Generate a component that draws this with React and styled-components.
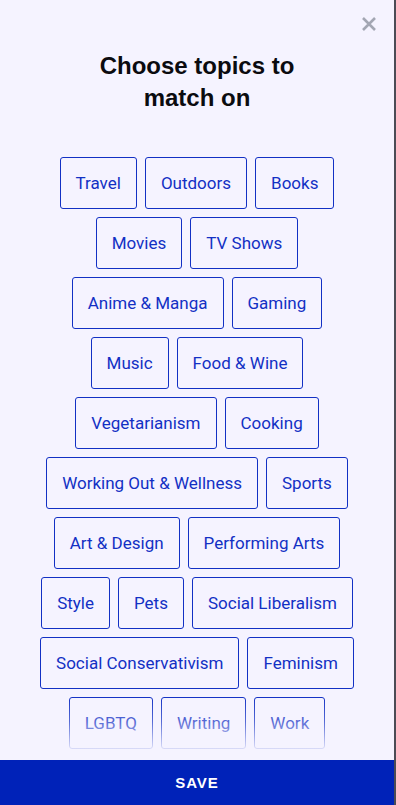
import React from 'react';
import styled, { createGlobalStyle } from 'styled-components';

const Global = createGlobalStyle`
	html, body {
		margin: 0;
		padding: 0;
		height: 100%;
		background: #4b4b55;
	}
	#root {
		height: 100%;
	}
`;

const Modal = styled.div`
	width: 394px;
	height: 805px;
	background: #f5f3ff;
	display: flex;
	flex-direction: column;
	position: relative;
	font-family: Roboto, 'Liberation Sans', sans-serif;
`;

const Close = styled.button`
	position: absolute;
	top: 14px;
	right: 15px;
	width: 20px;
	height: 20px;
	padding: 0;
	border: none;
	background: transparent;
	display: flex;
	align-items: center;
	justify-content: center;
`;

const Title = styled.h1`
	margin: 50px 0 0;
	font-family: 'Liberation Sans', Arial, sans-serif;
	font-weight: 700;
	font-size: 24px;
	line-height: 32px;
	text-align: center;
	color: #0b0b0f;
`;

const Scroll = styled.div`
	flex: 1;
	position: relative;
	overflow: hidden;
	margin-top: 43px;
`;

const Topics = styled.div`
	display: flex;
	flex-wrap: wrap;
	justify-content: center;
	gap: 8px;
	padding: 0 32px;
`;

const Chip = styled.button`
	height: 52px;
	padding: 0 15px;
	border: 1px solid #1230c4;
	border-radius: 3px;
	background: transparent;
	color: #1230c4;
	font-family: Roboto, 'Liberation Sans', sans-serif;
	font-size: 17px;
	white-space: nowrap;
`;

const Fade = styled.div`
	position: absolute;
	left: 0;
	right: 0;
	bottom: 0;
	height: 64px;
	background: linear-gradient(to bottom, rgba(245, 243, 255, 0) 0%, rgba(245, 243, 255, 0.3) 40%, rgba(245, 243, 255, 0.85) 80%, rgba(245, 243, 255, 1) 100%);
	pointer-events: none;
`;

const Save = styled.button`
	height: 45px;
	flex-shrink: 0;
	border: none;
	background: #0022b8;
	color: #ffffff;
	font-family: 'Liberation Sans', Arial, sans-serif;
	font-weight: 700;
	font-size: 15px;
	letter-spacing: 1px;
`;

const topics = [
	'Travel', 'Outdoors', 'Books', 'Movies', 'TV Shows', 'Anime & Manga', 'Gaming',
	'Music', 'Food & Wine', 'Vegetarianism', 'Cooking', 'Working Out & Wellness', 'Sports',
	'Art & Design', 'Performing Arts', 'Style', 'Pets', 'Social Liberalism',
	'Social Conservativism', 'Feminism', 'LGBTQ', 'Writing', 'Work',
];

export default function App() {
	return (
		<Modal>
			<Global />
			<Close aria-label="Close">
				<svg width="16" height="16" viewBox="0 0 16 16">
					<path d="M2 2 L14 14 M14 2 L2 14" stroke="#a3a6b3" strokeWidth="2.6" />
				</svg>
			</Close>
			<Title>
				Choose topics to
				<br />
				match on
			</Title>
			<Scroll>
				<Topics>
					{topics.map((t) => (
						<Chip key={t}>{t}</Chip>
					))}
				</Topics>
				<Fade />
			</Scroll>
			<Save>SAVE</Save>
		</Modal>
	);
}
